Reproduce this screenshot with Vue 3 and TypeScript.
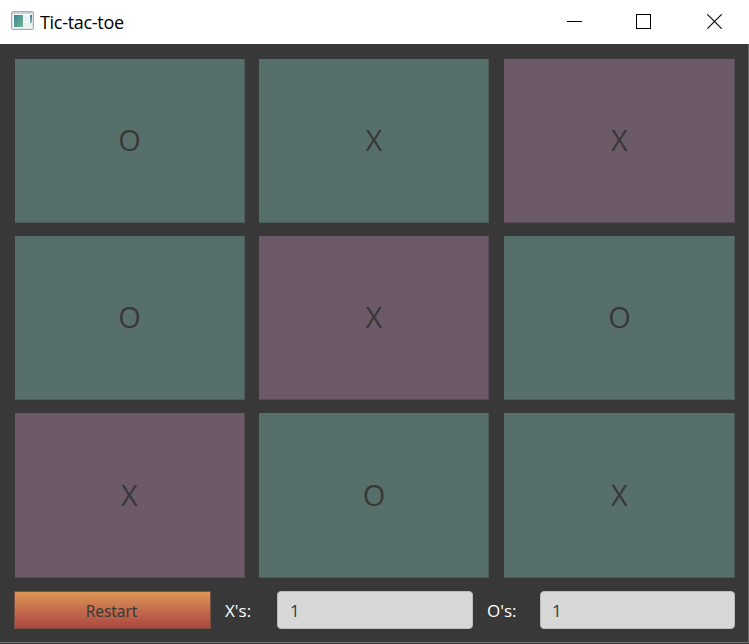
<script setup lang="ts">
import { ref } from 'vue'

type Mark = 'X' | 'O'
interface Cell {
  mark: Mark
  winning: boolean
}

const cells = ref<Cell[]>([
  { mark: 'O', winning: false },
  { mark: 'X', winning: false },
  { mark: 'X', winning: true },
  { mark: 'O', winning: false },
  { mark: 'X', winning: true },
  { mark: 'O', winning: false },
  { mark: 'X', winning: true },
  { mark: 'O', winning: false },
  { mark: 'X', winning: false },
])
const xWins = ref('1')
const oWins = ref('1')
</script>

<template>
  <div class="window">
    <header class="titlebar">
      <svg class="app-icon" width="24" height="20" viewBox="0 0 24 20">
        <defs>
          <linearGradient id="pane" x1="0" y1="0" x2="1" y2="1">
            <stop offset="0" stop-color="#3f7fa3" />
            <stop offset="1" stop-color="#6cbb83" />
          </linearGradient>
          <linearGradient id="strip" x1="0" y1="0" x2="0" y2="1">
            <stop offset="0" stop-color="#3f75a8" />
            <stop offset="1" stop-color="#7cc09a" />
          </linearGradient>
        </defs>
        <rect x=".5" y=".5" width="22" height="18" rx="1" fill="#dfe4e9" stroke="#a4adb7" />
        <rect x="1" y="1" width="21" height="1.5" fill="#c3cbd4" />
        <rect x="2" y="3" width="19" height="14" fill="#fafbfb" />
        <rect x="3" y="4" width="9" height="12" fill="url(#pane)" />
        <rect x="13" y="4" width="5" height="7" fill="#f0f1f2" />
        <rect x="13" y="12" width="8" height="4" fill="#eeeff0" />
        <rect x="19" y="4" width="2" height="8" fill="url(#strip)" />
      </svg>
      <span class="title">Tic-tac-toe</span>
      <div class="controls">
        <svg width="15" height="15" viewBox="0 0 15 15"><path d="M0 7.5H15" stroke="#000" /></svg>
        <svg class="maximize" width="15" height="15" viewBox="0 0 15 15">
          <rect x=".5" y=".5" width="14" height="14" fill="none" stroke="#000" />
        </svg>
        <svg width="15" height="15" viewBox="0 0 15 15">
          <path d="M.3 .3L14.7 14.7M14.7 .3L.3 14.7" stroke="#000" stroke-width="1.1" />
        </svg>
      </div>
    </header>
    <main class="content">
      <div class="board">
        <div v-for="(cell, i) in cells" :key="i" class="cell" :class="{ winning: cell.winning }">
          {{ cell.mark }}
        </div>
      </div>
      <footer class="status">
        <button class="restart" type="button">Restart</button>
        <label class="label" for="x-wins">X's:</label>
        <input id="x-wins" v-model="xWins" class="score" readonly />
        <label class="label label-o" for="o-wins">O's:</label>
        <input id="o-wins" v-model="oWins" class="score score-o" readonly />
      </footer>
    </main>
  </div>
</template>

<style>
body {
  margin: 0;
  overflow: hidden;
}
</style>

<style scoped>
.window {
  box-sizing: border-box;
  width: 749px;
  height: 644px;
  display: flex;
  flex-direction: column;
  background: #383838;
  font-family: 'Open Sans', 'Noto Sans', sans-serif;
}
.titlebar {
  height: 44px;
  flex: none;
  box-sizing: border-box;
  display: flex;
  align-items: center;
  padding: 0 27px 0 11px;
  background: #fff;
}
.app-icon {
  margin-bottom: 3px;
}
.title {
  margin-left: 5px;
  font-size: 18px;
  line-height: 24px;
  letter-spacing: -0.3px;
  color: #000;
}
.controls {
  display: flex;
  gap: 55px;
  margin-left: auto;
  padding-bottom: 1px;
}
.controls svg {
  display: block;
}
.controls .maximize {
  margin: 0 1px 0 -1px;
}
.content {
  box-sizing: border-box;
  height: 599px;
  padding: 15px 13px 0 15px;
  border-right: 1px solid #686868;
  border-bottom: 1px solid #777;
}
.board {
  display: grid;
  grid-template-columns: 230px 231px 231px;
  grid-template-rows: 164px 164px 165px;
  gap: 13px 14px;
}
.cell {
  box-sizing: border-box;
  display: flex;
  align-items: center;
  justify-content: center;
  padding-bottom: 1px;
  background: #576f6b;
  border-right: 1px solid #4b5c59;
  border-bottom: 1px solid #4b5c59;
  color: #383838;
  font-size: 29px;
  line-height: 40px;
}
.cell:nth-child(3n + 2) {
  margin-right: 1px;
  padding-left: 1px;
}
.cell:nth-child(3n) {
  padding-left: 1px;
}
.cell:nth-child(n + 7) {
  padding-bottom: 0;
}
.winning {
  background: #6c5a68;
  border-color: #594d57;
}
.status {
  display: flex;
  align-items: center;
  height: 38px;
  margin: 13px 0 0 -1px;
}
.restart {
  box-sizing: border-box;
  width: 197px;
  height: 38px;
  flex: none;
  padding: 1px 2px 0 0;
  border: 1px solid #74503f;
  background: linear-gradient(#dc9656, #ac4541);
  background-clip: padding-box;
  color: #383838;
  font-family: 'Noto Sans', sans-serif;
  font-size: 15.5px;
  letter-spacing: -0.1px;
}
.label {
  width: 52px;
  flex: none;
  margin-left: 14px;
  padding-top: 1px;
  color: #fff;
  font-size: 17px;
  line-height: 24px;
}
.label-o {
  width: 53px;
}
.score {
  box-sizing: border-box;
  width: 196px;
  height: 38px;
  flex: none;
  padding: 0 12px;
  border: 1px solid #bcbcbc;
  border-radius: 4px;
  outline: none;
  background: #d8d8d8;
  color: #383838;
  font: 17px 'Open Sans', sans-serif;
}
.score-o {
  width: 195px;
  padding-left: 11px;
}
</style>
